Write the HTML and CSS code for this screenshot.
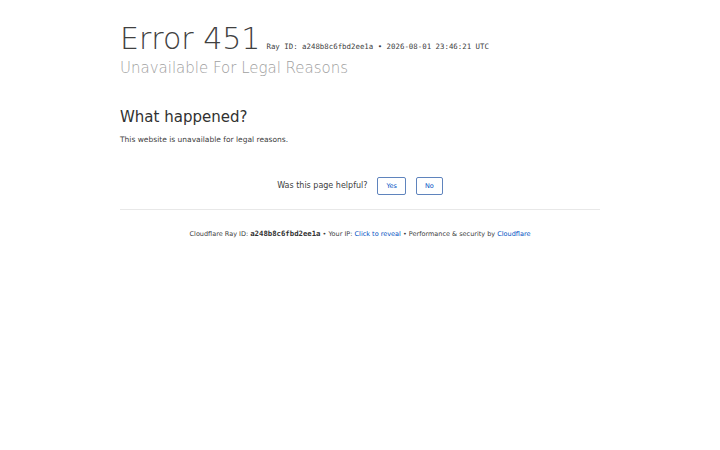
FILE: index.html
```html
<!DOCTYPE html>
<html lang="en">
<head>
  <meta charset="UTF-8" />
  <meta name="viewport" content="width=device-width, initial-scale=1.0"/>
  <title>Unavailable For Legal Reasons | Cloudflare</title>
  <link rel="stylesheet" href="styles.css">
</head>
<body>

  <div class="wrapper">

    <!-- Header -->
    <div class="header">
      <h1>
        <span class="code">Error 451</span>
        <span class="ray">Ray ID: a248b8c6fbd2ee1a &bull; 2026-08-01 23:46:21 UTC</span>
      </h1>
      <h2 class="subtitle">Unavailable For Legal Reasons</h2>
    </div>

    <!-- What happened -->
    <div class="section">
      <h2>What happened?</h2>
      <p>This website is unavailable for legal reasons.</p>
    </div>

    <!-- Feedback -->
    <div class="feedback">
      <span>Was this page helpful?</span>
      <button class="fb-btn">Yes</button>
      <button class="fb-btn">No</button>
    </div>

    <!-- Footer -->
    <p class="footer">
      Cloudflare Ray ID: <strong>a248b8c6fbd2ee1a</strong> &bull;
      Your IP: <a href="#">Click to reveal</a> &bull;
      Performance &amp; security by <a href="#">Cloudflare</a>
    </p>

  </div>

</body>
</html>
```

FILE: styles.css
```css
body {
  margin: 0;
  font-family: "DejaVu Sans", sans-serif;
  color: #404040;
  background: #fff;
}

.wrapper {
  width: 480px;
  margin: 0 auto;
  padding-top: 22px;
}

.header h1 {
  margin: 0;
  font-weight: normal;
  display: flex;
  align-items: baseline;
  gap: 6px;
  line-height: 1.15;
}

.code {
  font-size: 30px;
  font-weight: 200;
  color: #404040;
}

.ray {
  font-family: "DejaVu Sans Mono", monospace;
  font-size: 7.4px;
  color: #404040;
}

.subtitle {
  margin: 2px 0 0;
  font-size: 15px;
  font-weight: 200;
  color: #a0a0a0;
}

.section {
  margin-top: 31px;
}

.section h2 {
  margin: 0;
  font-size: 15px;
  font-weight: normal;
  color: #313131;
}

.section p {
  margin: 9px 0 0;
  font-size: 7.5px;
  color: #404040;
}

.feedback {
  margin-top: 33px;
  display: flex;
  justify-content: center;
  align-items: center;
  gap: 10px;
  font-size: 8px;
  color: #404040;
  padding-bottom: 14px;
  border-bottom: 1px solid #e8e8e8;
}

.fb-btn {
  font-family: "DejaVu Sans", sans-serif;
  font-size: 6.5px;
  color: #0051c3;
  background: #fff;
  border: 1px solid #5f84bd;
  border-radius: 2px;
  padding: 4px 8px;
  cursor: pointer;
}

.footer {
  margin: 19px 0 0;
  text-align: center;
  font-size: 6.5px;
  color: #404040;
}

.footer a {
  color: #0051c3;
  text-decoration: none;
}

.footer strong {
  font-family: "DejaVu Sans Mono", monospace;
  font-size: 7.3px;
  color: #313131;
}
```
